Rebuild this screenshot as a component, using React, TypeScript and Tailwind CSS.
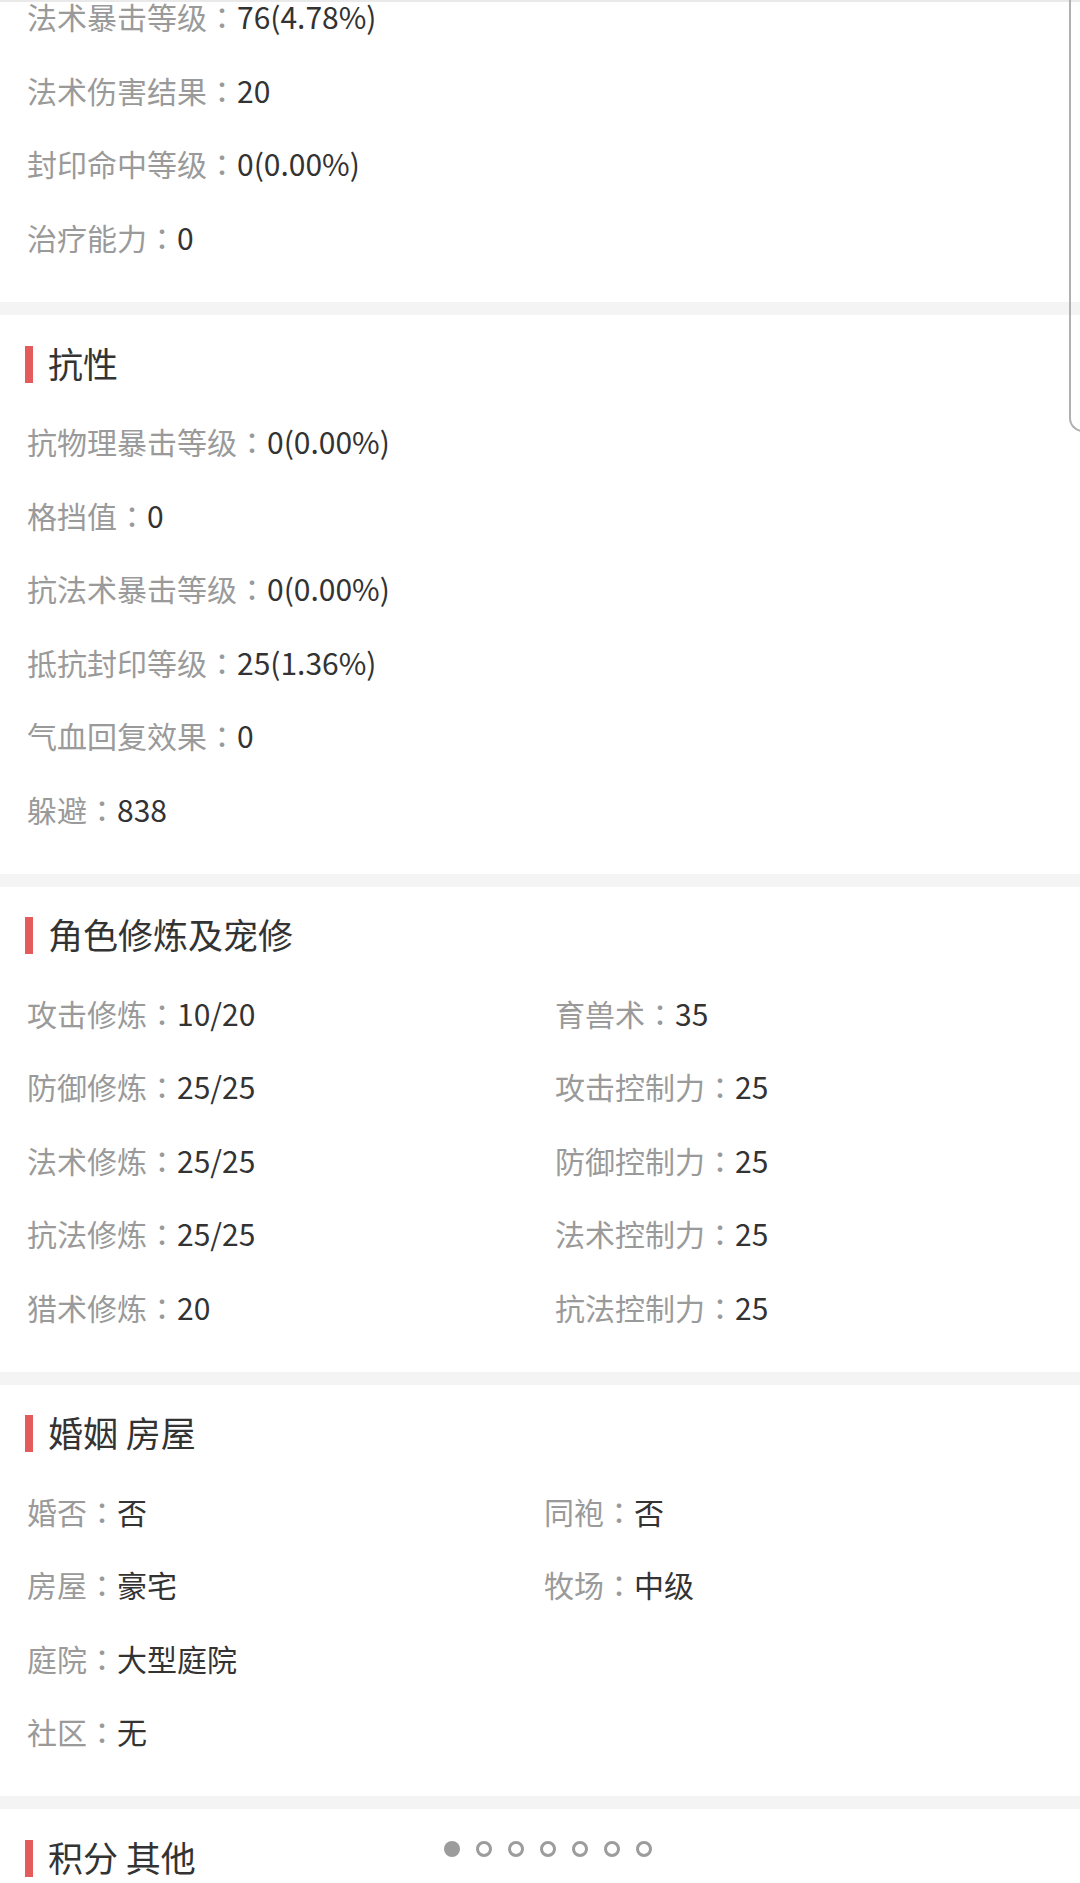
import React from "react";

type Item = [string, string];

function Row({ label, value, first }: { label: string; value: string; first?: boolean }) {
  return (
    <div
      className={
        first
          ? "h-[54.75px] pb-[22.75px] box-border flex items-center whitespace-nowrap"
          : "h-[73.5px] pb-[4px] box-border flex items-center whitespace-nowrap"
      }
    >
      <span className="text-[#9a9a9a]">{label}</span>
      <span
        className="text-[#9a9a9a] inline-block w-[1em] text-center"
        style={{ fontFamily: '"Noto Sans CJK JP", "Noto Sans CJK TC", sans-serif' }}
      >
        ：
      </span>
      <span className="text-[#333333]">{value}</span>
    </div>
  );
}

function Title({ text }: { text: string }) {
  return (
    <div className="pt-[24px] h-[91.25px] box-border">
      <div className="h-[50px] flex items-center pl-[25px]">
        <div className="w-[8px] h-[37px] bg-[#e35b5b]" />
        <div className="ml-[15px] pb-[4px] text-[35px] leading-none text-[#333333] whitespace-pre">{text}</div>
      </div>
    </div>
  );
}

function Divider() {
  return <div className="h-[13px] bg-[#f4f4f4]" />;
}

function SingleSection({ title, items }: { title: string; items: Item[] }) {
  return (
    <section className="bg-white pb-[26.25px]">
      <Title text={title} />
      <div className="pl-[27px]">
        {items.map(([l, v]) => (
          <Row key={l} label={l} value={v} />
        ))}
      </div>
    </section>
  );
}

export default function App() {
  const topItems: Item[] = [
    ["法术暴击等级", "76(4.78%)"],
    ["法术伤害结果", "20"],
    ["封印命中等级", "0(0.00%)"],
    ["治疗能力", "0"],
  ];
  const resist: Item[] = [
    ["抗物理暴击等级", "0(0.00%)"],
    ["格挡值", "0"],
    ["抗法术暴击等级", "0(0.00%)"],
    ["抵抗封印等级", "25(1.36%)"],
    ["气血回复效果", "0"],
    ["躲避", "838"],
  ];
  const cultivate: Item[] = [
    ["攻击修炼", "10/20"],
    ["育兽术", "35"],
    ["防御修炼", "25/25"],
    ["攻击控制力", "25"],
    ["法术修炼", "25/25"],
    ["防御控制力", "25"],
    ["抗法修炼", "25/25"],
    ["法术控制力", "25"],
    ["猎术修炼", "20"],
    ["抗法控制力", "25"],
  ];
  const marriage: (Item | null)[] = [
    ["婚否", "否"],
    ["同袍", "否"],
    ["房屋", "豪宅"],
    ["牧场", "中级"],
    ["庭院", "大型庭院"],
    null,
    ["社区", "无"],
    null,
  ];

  return (
    <div
      className="relative w-[1080px] h-[1883px] overflow-hidden bg-white text-[30px] leading-none"
      style={{ fontFamily: '"Noto Sans CJK SC", "Noto Sans", sans-serif' }}
    >
      <div>
        <section className="bg-white pb-[27px]">
          <div className="pl-[27px]">
            {topItems.map(([l, v], i) => (
              <Row key={l} label={l} value={v} first={i === 0} />
            ))}
          </div>
        </section>
        <Divider />
        <SingleSection title="抗性" items={resist} />
        <Divider />
        <section className="bg-white pb-[26.25px]">
          <Title text="角色修炼及宠修" />
          <div className="pl-[27px] grid grid-cols-[528px_1fr]">
            {cultivate.map(([l, v]) => (
              <Row key={l} label={l} value={v} />
            ))}
          </div>
        </section>
        <Divider />
        <section className="bg-white pb-[26.25px]">
          <Title text="婚姻 房屋" />
          <div className="pl-[27px] grid grid-cols-[517px_1fr]">
            {marriage.map((it, i) =>
              it ? <Row key={i} label={it[0]} value={it[1]} /> : <div key={i} className="h-[73.5px]" />
            )}
          </div>
        </section>
        <Divider />
        <section className="bg-white">
          <Title text="积分 其他" />
        </section>
      </div>

      {/* top edge line */}
      <div className="absolute left-0 top-0 w-full h-[2px] bg-[#e9e9e9]" />

      {/* right-side overlay edge */}
      <div className="absolute left-[1069px] -top-[20px] w-[40px] h-[452px] border-l-2 border-b-2 border-[#b0b0b0] rounded-bl-[14px]" />

      {/* pagination dots */}
      <div className="absolute top-[1841px] left-[444px] flex gap-[16px]">
        <div className="w-[16px] h-[16px] rounded-full bg-[#9c9c9c]" />
        {[0, 1, 2, 3, 4, 5].map((i) => (
          <div key={i} className="w-[16px] h-[16px] rounded-full border-[3px] border-[#9c9c9c] box-border" />
        ))}
      </div>
    </div>
  );
}
